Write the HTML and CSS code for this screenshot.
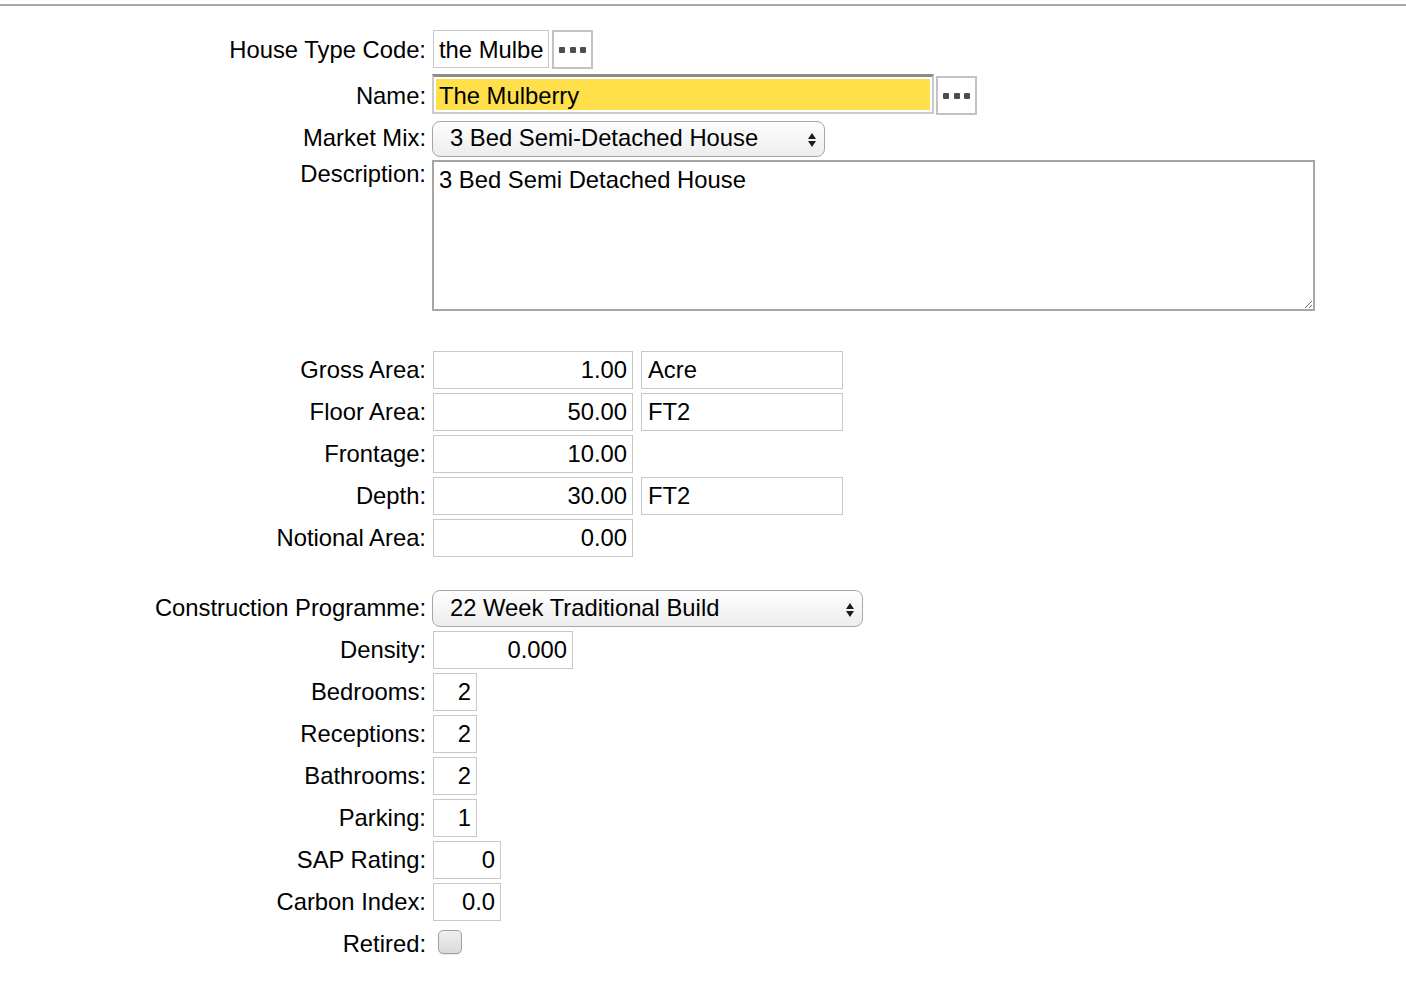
FILE: index.html
```html
<!DOCTYPE html>
<html lang="en">
<head>
<meta charset="utf-8">
<title>House Type</title>
<link rel="stylesheet" href="styles.css">
</head>
<body>
<div class="topline"></div>
<form class="form">
  <div class="row row--code">
    <label class="label" for="code">House Type Code:</label>
    <div class="field">
      <input id="code" class="input input--code" value="the Mulbe">
      <button type="button" class="lookup"><span class="dot"></span><span class="dot"></span><span class="dot"></span></button>
    </div>
  </div>
  <div class="row row--name">
    <label class="label" for="name">Name:</label>
    <div class="field">
      <input id="name" class="input input--name" value="The Mulberry">
      <button type="button" class="lookup lookup--name"><span class="dot"></span><span class="dot"></span><span class="dot"></span></button>
    </div>
  </div>
  <div class="row row--mix">
    <span class="label">Market Mix:</span>
    <div class="select select--mix">
      <span class="select-value">3 Bed Semi-Detached House</span>
      <svg class="select-arrows" width="8" height="14" viewBox="0 0 8 14"><polygon points="0,6 4,0 8,6"/><polygon points="0,8 8,8 4,14"/></svg>
    </div>
  </div>
  <div class="row row--desc">
    <label class="label" for="desc">Description:</label>
    <textarea id="desc" class="textarea">3 Bed Semi Detached House</textarea>
  </div>

  <div class="row row--section">
    <span class="label">Gross Area:</span>
    <div class="field">
      <input class="input input--num" value="1.00">
      <input class="input input--unit" value="Acre">
    </div>
  </div>
  <div class="row">
    <span class="label">Floor Area:</span>
    <div class="field">
      <input class="input input--num" value="50.00">
      <input class="input input--unit" value="FT2">
    </div>
  </div>
  <div class="row">
    <span class="label">Frontage:</span>
    <div class="field">
      <input class="input input--num" value="10.00">
    </div>
  </div>
  <div class="row">
    <span class="label">Depth:</span>
    <div class="field">
      <input class="input input--num" value="30.00">
      <input class="input input--unit" value="FT2">
    </div>
  </div>
  <div class="row">
    <span class="label">Notional Area:</span>
    <div class="field">
      <input class="input input--num" value="0.00">
    </div>
  </div>

  <div class="row row--prog">
    <span class="label">Construction Programme:</span>
    <div class="select select--prog">
      <span class="select-value">22 Week Traditional Build</span>
      <svg class="select-arrows" width="8" height="14" viewBox="0 0 8 14"><polygon points="0,6 4,0 8,6"/><polygon points="0,8 8,8 4,14"/></svg>
    </div>
  </div>
  <div class="row">
    <span class="label">Density:</span>
    <div class="field"><input class="input input--num input--density" value="0.000"></div>
  </div>
  <div class="row">
    <span class="label">Bedrooms:</span>
    <div class="field"><input class="input input--num input--tiny" value="2"></div>
  </div>
  <div class="row">
    <span class="label">Receptions:</span>
    <div class="field"><input class="input input--num input--tiny" value="2"></div>
  </div>
  <div class="row">
    <span class="label">Bathrooms:</span>
    <div class="field"><input class="input input--num input--tiny" value="2"></div>
  </div>
  <div class="row">
    <span class="label">Parking:</span>
    <div class="field"><input class="input input--num input--tiny" value="1"></div>
  </div>
  <div class="row">
    <span class="label">SAP Rating:</span>
    <div class="field"><input class="input input--num input--small" value="0"></div>
  </div>
  <div class="row">
    <span class="label">Carbon Index:</span>
    <div class="field"><input class="input input--num input--small" value="0.0"></div>
  </div>
  <div class="row row--retired">
    <label class="label" for="retired">Retired:</label>
    <input id="retired" type="checkbox" class="checkbox">
  </div>
</form>
</body>
</html>
```

FILE: styles.css
```css
body {
  margin: 0;
  background: #fff;
  color: #000;
  font-family: "Liberation Sans", Arial, Helvetica, sans-serif;
  font-size: 23.8px;
}

.topline {
  margin-top: 4px;
  border-top: 2px solid #a9a9a9;
}

.form {
  display: flex;
  flex-direction: column;
  gap: 4px;
  padding-top: 24px;
}

.row {
  display: flex;
  align-items: flex-start;
  gap: 6px;
}

.label {
  flex: 0 0 426px;
  text-align: right;
  line-height: 26px;
  padding-top: 6px;
}

.field {
  display: flex;
  align-items: flex-start;
}

/* row-specific spacing */
.row--code .label { padding-top: 7px; }
.row--name { margin-top: 1px; }
.row--name .label { padding-top: 9px; }
.row--mix { margin-top: 2px; }
.row--mix .label { padding-top: 4px; }
.row--desc { margin-top: -1px; }
.row--desc .label { padding-top: 1px; }
.row--section { margin-top: 36px; }
.row--prog { margin-top: 29px; }
.row--prog .label { padding-top: 5px; }
.row--retired .label { padding-top: 6px; }

/* text inputs */
.input {
  box-sizing: border-box;
  height: 38px;
  margin: 0 0 0 1px;
  padding: 5px 6px 5px;
  border: 1px solid #c8c8c8;
  border-radius: 0;
  background: #fff;
  color: #000;
  font: inherit;
  line-height: 26px;
  outline: none;
}

.input--code {
  width: 116px;
  padding: 6px 5px 4px;
}

.input--name {
  width: 502px;
  height: 40px;
  margin-left: 0;
  padding: 6px 5px 3px;
  border: 2px solid #cbcbcb;
  border-top: 3px solid #8c8c8c;
  background: #ffe04b;
  box-shadow: inset 0 0 0 2px #fff;
}

.input--num {
  width: 200px;
  text-align: right;
  padding-right: 5px;
}

.input--unit {
  width: 202px;
  margin-left: 8px;
}

.input--density { width: 140px; }
.input--tiny { width: 44px; }
.input--small { width: 68px; }

/* lookup buttons */
.lookup {
  box-sizing: border-box;
  width: 41px;
  height: 39px;
  margin: 0 0 0 3px;
  padding: 0;
  border: 2px solid #c2c2c2;
  background: #fff;
  display: flex;
  align-items: center;
  justify-content: center;
  gap: 4.5px;
}

.lookup--name {
  margin-left: 2px;
  margin-top: 2px;
}

.dot {
  width: 6px;
  height: 6px;
  background: #4d4d4d;
  border-radius: 1px;
}

/* selects */
.select {
  box-sizing: border-box;
  display: flex;
  align-items: flex-start;
  justify-content: space-between;
  height: 36px;
  padding: 3px 8px 0 17px;
  border: 1px solid #a7a7a7;
  border-radius: 8px;
  background: linear-gradient(#fefefe, #ededed);
  line-height: 26px;
  white-space: nowrap;
}

.select--mix { width: 393px; }

.select--prog {
  width: 431px;
  height: 37px;
  padding-top: 4px;
}

.select-arrows {
  align-self: center;
  margin-bottom: 2px;
  fill: #1c1c1c;
  flex: 0 0 auto;
}

/* textarea */
.textarea {
  box-sizing: border-box;
  width: 883px;
  height: 151px;
  margin: 0;
  padding: 5px;
  border: 2px solid #a6a6a6;
  border-radius: 0;
  font: inherit;
  line-height: 26px;
  color: #000;
  background: #fff;
  outline: none;
  resize: both;
}

/* checkbox */
.checkbox {
  appearance: none;
  -webkit-appearance: none;
  box-sizing: border-box;
  width: 24px;
  height: 24px;
  margin: 5px 0 0 6px;
  border: 1px solid #a0a0a0;
  border-radius: 5px;
  background: linear-gradient(#efefef, #dadada);
  box-shadow: 0 1px 1px rgba(0, 0, 0, 0.08);
}
```
